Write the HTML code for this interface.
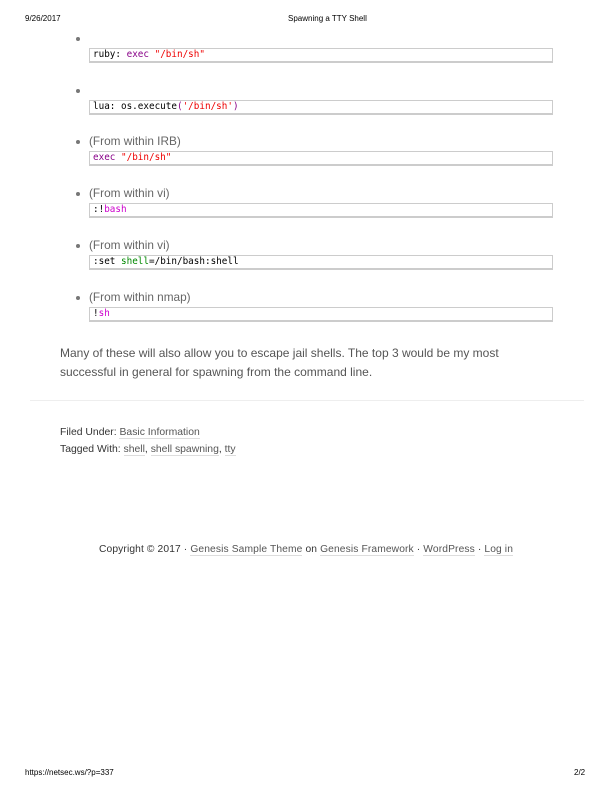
<!DOCTYPE html>
<html><head><style>
body{margin:0;width:612px;height:792px;position:relative;background:#fff;font-family:"Liberation Sans",sans-serif;color:#333;}
.a{position:absolute;white-space:nowrap;}
.hd{font-size:8px;color:#000;}
.b{position:absolute;left:76px;width:4px;height:4px;border-radius:50%;background:#777;}
.lbl{position:absolute;left:89px;font-size:11.8px;color:#666;line-height:14px;}
.code{position:absolute;left:89px;width:459px;height:12px;border:1px solid #ccc;border-bottom:2px solid #ccc;background:#fff;font-family:"DejaVu Sans Mono","Liberation Mono",monospace;font-size:9.3px;line-height:12px;padding-left:3px;color:#000;box-sizing:content-box;}
.k{color:#808}.s{color:#e00}.m{color:#c0c}.g{color:#080}
.u{border-bottom:1px solid #ddd;color:#555}
</style></head><body>
<div class="a hd" style="left:25px;top:14px;">9/26/2017</div>
<div class="a hd" style="left:288px;top:14px;">Spawning a TTY Shell</div>
<div class="b" style="top:37px"></div>
<div class="code" style="top:48px">ruby: <span class="k">exec</span> <span class="s">"/bin/sh"</span></div>
<div class="b" style="top:89px"></div>
<div class="code" style="top:100px">lua: os.execute<span class="k">(</span><span class="s">'/bin/sh'</span><span class="k">)</span></div>
<div class="b" style="top:140px"></div>
<div class="lbl" style="top:134px">(From within IRB)</div>
<div class="code" style="top:151px"><span class="k">exec</span> <span class="s">"/bin/sh"</span></div>
<div class="b" style="top:192px"></div>
<div class="lbl" style="top:186px">(From within vi)</div>
<div class="code" style="top:203px">:!<span class="m">bash</span></div>
<div class="b" style="top:244px"></div>
<div class="lbl" style="top:238px">(From within vi)</div>
<div class="code" style="top:255px">:set <span class="g">shell</span>=/bin/bash:shell</div>
<div class="b" style="top:296px"></div>
<div class="lbl" style="top:290px">(From within nmap)</div>
<div class="code" style="top:307px">!<span class="m">sh</span></div>
<div class="a" style="left:60px;top:344px;font-size:12px;color:#555;line-height:19px;">Many of these will also allow you to escape jail shells. The top 3 would be my most<br>successful in general for spawning from the command line.</div>
<div class="a" style="left:30px;top:400px;width:554px;height:1px;background:#eee;"></div>
<div class="a" style="left:60px;top:427px;font-size:10.4px;color:#333;">Filed Under: <span class="u">Basic Information</span></div>
<div class="a" style="left:60px;top:444px;font-size:10.4px;color:#333;">Tagged With: <span class="u">shell</span>, <span class="u">shell spawning</span>, <span class="u">tty</span></div>
<div class="a" style="left:99px;top:544px;font-size:10.25px;color:#333;letter-spacing:0.12px;">Copyright © 2017 · <span class="u">Genesis Sample Theme</span> on <span class="u">Genesis Framework</span> · <span class="u">WordPress</span> · <span class="u">Log in</span></div>
<div class="a hd" style="left:25px;top:768px;">https://netsec.ws/?p=337</div>
<div class="a hd" style="left:574px;top:768px;">2/2</div>
</body></html>
